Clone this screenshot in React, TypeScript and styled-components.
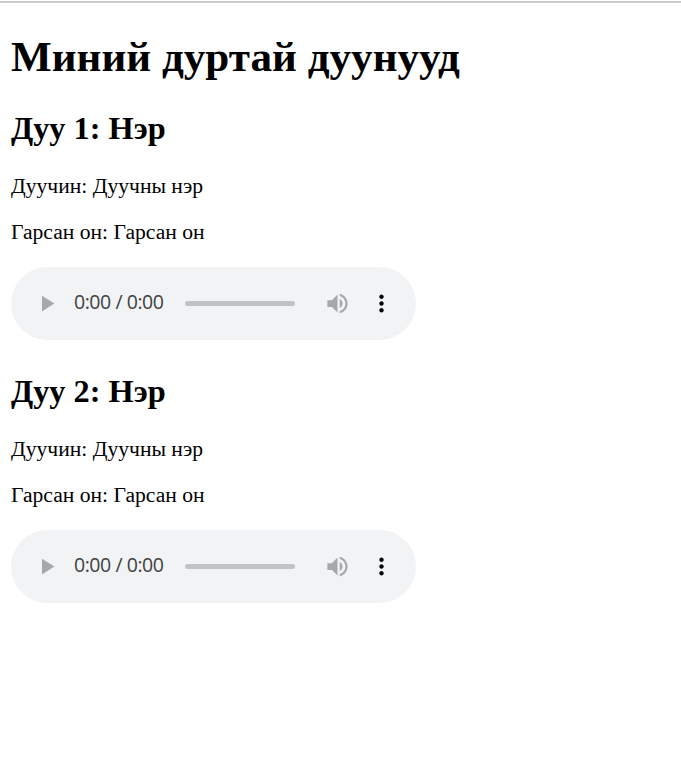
import React from 'react';
import styled, { createGlobalStyle } from 'styled-components';

const GlobalStyle = createGlobalStyle`
  body { margin: 0; background: #fff; color: #000; font-family: "Liberation Serif", "Times New Roman", serif; }
`;
const Page = styled.main`
  min-height: 777px;
  box-sizing: border-box;
  padding-top: 1px;
`;
const Divider = styled.div`
  height: 2px;
  background: #cbcccc;
`;
const Content = styled.div`
  padding: 29px 11px 0;
`;
const Title = styled.h1`
  margin: 0 0 27px;
  font-size: 43.15px;
  line-height: 50px;
  white-space: nowrap;
`;
const Song = styled.section`
  height: 263px;
`;
const SongTitle = styled.h2`
  margin: 0 0 27px;
  font-size: 32.3px;
  line-height: 38px;
`;
const Detail = styled.p`
  margin: 0 0 22px;
  font-size: 21.6px;
  line-height: 24px;
`;
const Player = styled.div`
  display: flex;
  align-items: center;
  box-sizing: border-box;
  width: 405px;
  height: 73px;
  margin-top: 23px;
  padding-left: 22px;
  border-radius: 37px;
  background: #f1f3f4;
`;
const Icon = styled.svg<{ $faded?: boolean }>`
  display: block;
  flex: none;
  width: 27px;
  height: 27px;
  fill: #000;
  opacity: ${(p) => (p.$faded ? 0.3 : 1)};
`;
const Time = styled.span`
  width: 111px;
  margin-left: 14px;
  padding-bottom: 3px;
  font: 400 19.5px/24px "Open Sans", sans-serif;
  letter-spacing: -0.45px;
  color: #404142;
  white-space: nowrap;
`;
const Track = styled.div`
  width: 110px;
  height: 5px;
  margin-right: 29px;
  border-radius: 3px;
  background: #c1c2c3;
`;
const Menu = styled.div`
  margin-left: 17px;
`;

const songs = ['Дуу 1: Нэр', 'Дуу 2: Нэр'];

export default function App() {
  return (
    <>
      <GlobalStyle />
      <Page>
        <Divider />
        <Content>
          <Title>Миний дуртай дуунууд</Title>
          {songs.map((name) => (
            <Song key={name}>
              <SongTitle>{name}</SongTitle>
              <Detail>Дуучин: Дуучны нэр</Detail>
              <Detail>Гарсан он: Гарсан он</Detail>
              <Player>
                <Icon $faded viewBox="0 0 24 24"><path d="M8 5v14l11-7z" /></Icon>
                <Time>0:00 / 0:00</Time>
                <Track />
                <Icon $faded viewBox="0 0 24 24"><path d="M3 9v6h4l5 5V4L7 9H3zm13.500 3c0-1.770-1.020-3.290-2.500-4.030v8.050c1.480-.73 2.500-2.250 2.500-4.020zM14 3.230v2.060c2.890.86 5 3.540 5 6.710s-2.110 5.850-5 6.710v2.060c4.010-.91 7-4.490 7-8.770s-2.990-7.860-7-8.770z" /></Icon>
                <Menu>
                  <Icon viewBox="0 0 24 24"><path d="M12 8c1.100 0 2-.9 2-2s-.9-2-2-2-2 .9-2 2 .9 2 2 2zm0 2c-1.100 0-2 .9-2 2s.9 2 2 2 2-.9 2-2-.9-2-2-2zm0 6c-1.100 0-2 .9-2 2s.9 2 2 2 2-.9 2-2-.9-2-2-2z" /></Icon>
                </Menu>
              </Player>
            </Song>
          ))}
        </Content>
      </Page>
    </>
  );
}
